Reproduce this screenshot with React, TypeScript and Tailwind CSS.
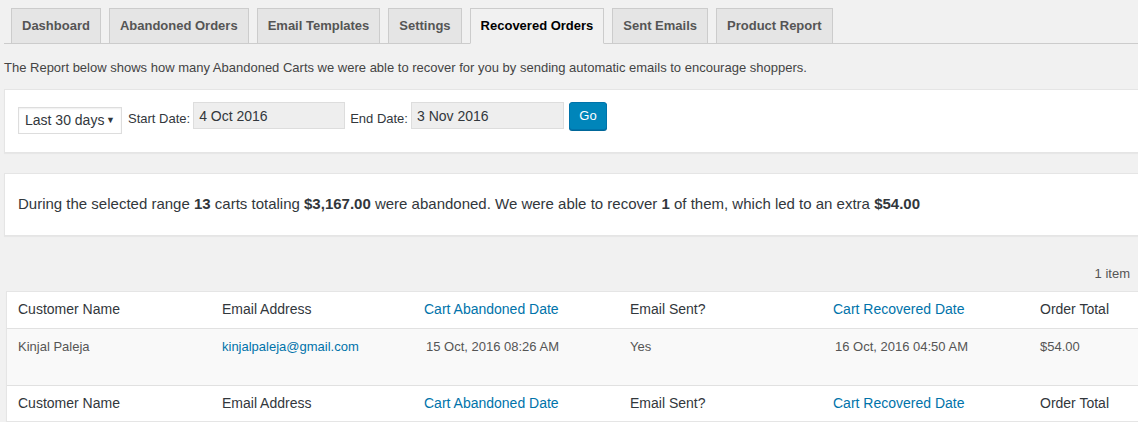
import { useState } from "react";

const tabs = [
  "Dashboard",
  "Abandoned Orders",
  "Email Templates",
  "Settings",
  "Recovered Orders",
  "Sent Emails",
  "Product Report",
];

const cols = "grid grid-cols-[204px_202px_206px_203px_207px_1fr]";

function HeadRow({ top }: { top?: boolean }) {
  return (
    <div className={`${cols} h-[36px] items-center text-[14px] text-[#32373c] ${top ? "" : "border-t border-[#e1e1e1]"}`}>
      <span className="pl-[11px]">Customer Name</span>
      <span className="pl-[11px]">Email Address</span>
      <a className="pl-[11px] text-[#0073aa]">Cart Abandoned Date</a>
      <span className="pl-[11px]">Email Sent?</span>
      <a className="pl-[11px] text-[#0073aa]">Cart Recovered Date</a>
      <span className="pl-[11px]">Order Total</span>
    </div>
  );
}

export default function App() {
  const [active] = useState("Recovered Orders");

  return (
    <div
      className="h-[422px] w-full overflow-hidden bg-[#f1f1f1] text-[#444]"
      style={{ fontFamily: '"Liberation Sans", Arial, sans-serif' }}
    >
      <div className="w-[1160px] pl-[4px] pt-[8px]">
        <nav className="flex gap-2 border-b border-[#ccc] pl-[7px]">
          {tabs.map((t) => (
            <a
              key={t}
              className={`-mb-px flex h-[36px] items-center border border-[#ccc] px-[10px] text-[13px] font-bold ${
                t === active ? "border-b-[#f1f1f1] bg-[#f1f1f1] text-black" : "bg-[#e5e5e5] text-[#555]"
              }`}
            >
              {t}
            </a>
          ))}
        </nav>

        <p className="mt-[14px] text-[13px] leading-[20px]">
          The Report below shows how many Abandoned Carts we were able to recover for you by sending automatic emails to encourage shoppers.
        </p>

        <div className="mt-[11px] flex h-[64px] items-start border border-[#e5e5e5] bg-white pl-[13px] pt-[12px] shadow-[0_1px_1px_rgba(0,0,0,0.04)]">
          <div className="mt-[5px] flex h-[27px] w-[104px] shrink-0 items-center justify-between whitespace-nowrap border border-[#ddd] bg-white pl-[6px] pr-[6px] text-[14px] text-[#32373c] shadow-[inset_0_1px_2px_rgba(0,0,0,0.07)]">
            <span>Last 30 days</span>
            <span className="text-[9px]">▼</span>
          </div>
          <label className="ml-[6px] mt-[7px] whitespace-nowrap text-[13px] leading-[20px] text-[#32373c]">Start Date:</label>
          <div className="ml-[3px] flex h-[27px] w-[152px] shrink-0 items-start border border-[#ddd] bg-[#eee] pl-[5px] pt-[3px] text-[14px] text-[#32373c]">
            4 Oct 2016
          </div>
          <label className="ml-[5px] mt-[7px] whitespace-nowrap text-[13px] leading-[20px] text-[#32373c]">End Date:</label>
          <div className="ml-[3px] flex h-[27px] w-[153px] shrink-0 items-start border border-[#ddd] bg-[#eee] pl-[5px] pt-[3px] text-[14px] text-[#32373c]">
            3 Nov 2016
          </div>
          <button className="ml-[5px] h-[28px] w-[38px] rounded-[3px] border border-[#0073aa] bg-[#0085ba] text-[13px] text-white shadow-[0_1px_0_#006799]">
            Go
          </button>
        </div>

        <div className="mt-[20px] flex h-[63px] items-center border border-[#e5e5e5] bg-white pl-[13px] text-[15px] text-[#32373c] shadow-[0_1px_1px_rgba(0,0,0,0.04)]">
          <span>
            During the selected range <b className="font-semibold">13</b> carts totaling{" "}
            <b className="font-semibold">$3,167.00</b> were abandoned. We were able to recover{" "}
            <b className="font-semibold">1</b> of them, which led to an extra{" "}
            <b className="font-semibold">$54.00</b>
          </span>
        </div>

        <div className="mt-[28px] flex w-[1134px] justify-end pr-[8px] text-[13px] text-[#555]">1 item</div>

        <div className="ml-[2px] mt-[7px] border border-[#e5e5e5] bg-white shadow-[0_1px_1px_rgba(0,0,0,0.04)]">
          <HeadRow top />
          <div className={`${cols} h-[57px] items-start border-t border-[#e1e1e1] bg-[#f9f9f9] pt-[8px] text-[13px] text-[#555]`}>
            <span className="pl-[11px]">Kinjal Paleja</span>
            <a className="pl-[11px] text-[#0073aa]">kinjalpaleja@gmail.com</a>
            <span className="pl-[13px]">15 Oct, 2016 08:26 AM</span>
            <span className="pl-[11px]">Yes</span>
            <span className="pl-[13px]">16 Oct, 2016 04:50 AM</span>
            <span className="pl-[11px]">$54.00</span>
          </div>
          <HeadRow />
        </div>
      </div>
    </div>
  );
}
